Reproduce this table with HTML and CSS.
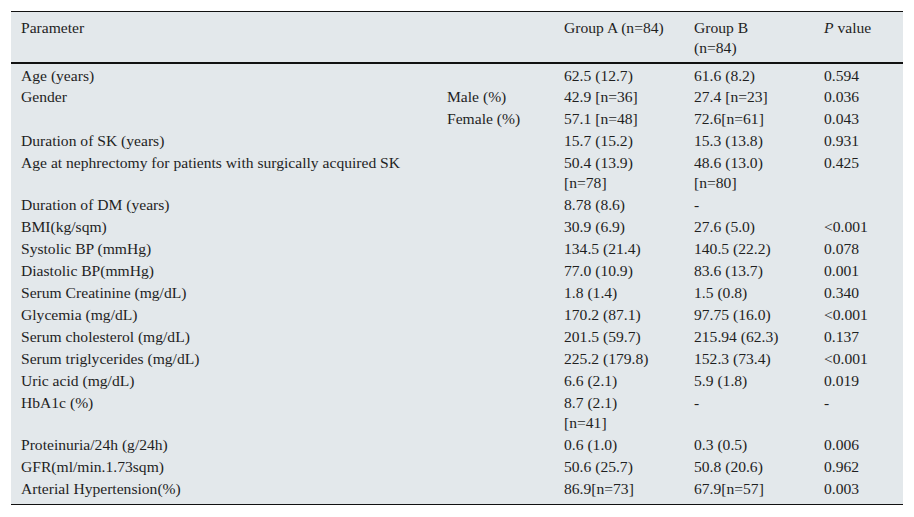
FILE: index.html
```html
<!DOCTYPE html>
<html lang="en">
<head>
<meta charset="utf-8">
<title>Table</title>
<link rel="stylesheet" href="styles.css">
</head>
<body>
<div class="page">
<table class="data">
<colgroup>
<col class="c1"><col class="c2"><col class="c3"><col class="c4"><col class="c5">
</colgroup>
<thead>
<tr><th>Parameter</th><th></th><th>Group A (n=84)</th><th>Group B<br>(n=84)</th><th><i>P</i> value</th></tr>
</thead>
<tbody>
<tr><td>Age (years)</td><td></td><td>62.5 (12.7)</td><td>61.6 (8.2)</td><td>0.594</td></tr>
<tr><td>Gender</td><td>Male (%)</td><td>42.9 [n=36]</td><td>27.4 [n=23]</td><td>0.036</td></tr>
<tr><td></td><td>Female (%)</td><td>57.1 [n=48]</td><td>72.6[n=61]</td><td>0.043</td></tr>
<tr><td>Duration of SK (years)</td><td></td><td>15.7 (15.2)</td><td>15.3 (13.8)</td><td>0.931</td></tr>
<tr><td>Age at nephrectomy for patients with surgically acquired SK</td><td></td><td>50.4 (13.9)<br>[n=78]</td><td>48.6 (13.0)<br>[n=80]</td><td>0.425</td></tr>
<tr><td>Duration of DM (years)</td><td></td><td>8.78 (8.6)</td><td>-</td><td></td></tr>
<tr><td>BMI(kg/sqm)</td><td></td><td>30.9 (6.9)</td><td>27.6 (5.0)</td><td>&lt;0.001</td></tr>
<tr><td>Systolic BP (mmHg)</td><td></td><td>134.5 (21.4)</td><td>140.5 (22.2)</td><td>0.078</td></tr>
<tr><td>Diastolic BP(mmHg)</td><td></td><td>77.0 (10.9)</td><td>83.6 (13.7)</td><td>0.001</td></tr>
<tr><td>Serum Creatinine (mg/dL)</td><td></td><td>1.8 (1.4)</td><td>1.5 (0.8)</td><td>0.340</td></tr>
<tr><td>Glycemia (mg/dL)</td><td></td><td>170.2 (87.1)</td><td>97.75 (16.0)</td><td>&lt;0.001</td></tr>
<tr><td>Serum cholesterol (mg/dL)</td><td></td><td>201.5 (59.7)</td><td>215.94 (62.3)</td><td>0.137</td></tr>
<tr><td>Serum triglycerides (mg/dL)</td><td></td><td>225.2 (179.8)</td><td>152.3 (73.4)</td><td>&lt;0.001</td></tr>
<tr><td>Uric acid (mg/dL)</td><td></td><td>6.6 (2.1)</td><td>5.9 (1.8)</td><td>0.019</td></tr>
<tr><td>HbA1c (%)</td><td></td><td>8.7 (2.1)<br>[n=41]</td><td>-</td><td>-</td></tr>
<tr><td>Proteinuria/24h (g/24h)</td><td></td><td>0.6 (1.0)</td><td>0.3 (0.5)</td><td>0.006</td></tr>
<tr><td>GFR(ml/min.1.73sqm)</td><td></td><td>50.6 (25.7)</td><td>50.8 (20.6)</td><td>0.962</td></tr>
<tr class="last"><td>Arterial Hypertension(%)</td><td></td><td>86.9[n=73]</td><td>67.9[n=57]</td><td>0.003</td></tr>
</tbody>
</table>
</div>
</body>
</html>
```
FILE: styles.css
```css
html, body {
  margin: 0;
  padding: 0;
  background: #ffffff;
}
.page {
  padding: 11px 11px 0 11px;
}
.data {
  width: 892px;
  table-layout: fixed;
  border-collapse: collapse;
  background: #e3e8eb;
  font-family: "Liberation Serif", "Times New Roman", serif;
  font-size: 15.6px;
  line-height: 20px;
  color: #1f1f1f;
  border-top: 1px solid #111;
  border-bottom: 1.5px solid #111;
}
.c1 { width: 426px; }
.c2 { width: 117px; }
.c3 { width: 130px; }
.c4 { width: 130px; }
.c5 { width: 89px; }
.data th, .data td {
  padding: 1px 10px;
  text-align: left;
  vertical-align: top;
  font-weight: normal;
  white-space: nowrap;
}
.data th {
  padding-top: 6px;
  padding-bottom: 4px;
}
.data thead tr {
  border-bottom: 2px solid #111;
}
.data tbody tr:first-child td {
  padding-top: 2px;
  padding-bottom: 0;
}
.data tr.last td {
  padding-bottom: 5px;
}
```
